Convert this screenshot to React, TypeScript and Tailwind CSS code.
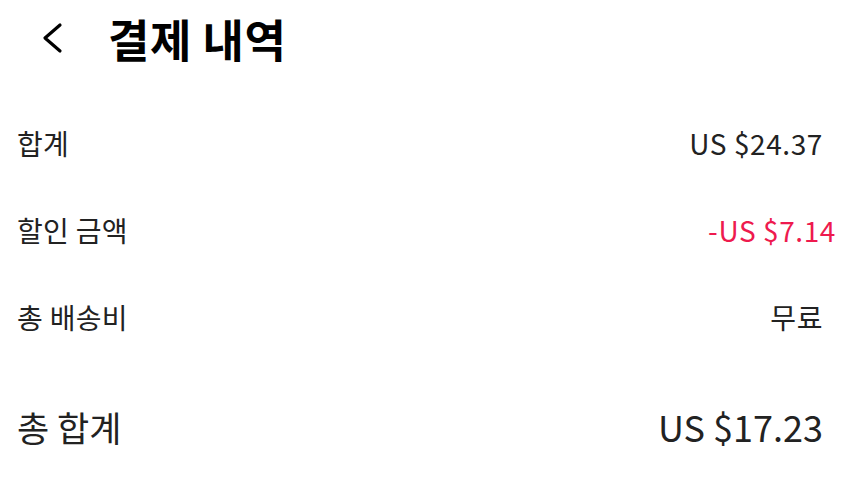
const font = { fontFamily: '"Noto Sans CJK KR", "Noto Sans", sans-serif' };

type Line = { label: string; value: string; red?: boolean };

const lines: Line[] = [
  { label: '합계', value: 'US $24.37' },
  { label: '할인 금액', value: '-US $7.14', red: true },
  { label: '총 배송비', value: '무료' },
];

function BackIcon() {
  return (
    <svg width="24" height="32" viewBox="0 0 24 32" fill="none" className="text-black">
      <polyline points="20,3 5,16 20,29" stroke="currentColor" strokeWidth="3.2" strokeLinecap="round" strokeLinejoin="round" />
    </svg>
  );
}

export default function App() {
  return (
    <div className="w-[850px] h-[484px] bg-white text-[#222]" style={font}>
      <header className="flex items-center h-[76px] pl-[40px]">
        <BackIcon />
        <h1 className="ml-[44px] text-[45px] font-bold text-black leading-none tracking-[0.5px]">결제 내역</h1>
      </header>

      <div className="mt-[23px]">
        {lines.map((line) => (
          <div key={line.label} className="flex items-center justify-between h-[87px] pl-[17px] pr-[27px]">
            <span className="text-[28px] leading-none tracking-[0.3px]">{line.label}</span>
            <span
              className={
                line.red
                  ? 'text-[28px] leading-none tracking-[0.6px] text-[#ee1a4e] -mr-[13px]'
                  : 'text-[28px] leading-none tracking-[0.6px]'
              }
            >
              {line.value}
            </span>
          </div>
        ))}
      </div>

      <div className="flex items-center justify-between h-[80px] mt-[26px] pl-[17px] pr-[27px]">
        <span className="text-[35px] leading-none">총 합계</span>
        <span className="text-[36px] leading-none">US $17.23</span>
      </div>
    </div>
  );
}
